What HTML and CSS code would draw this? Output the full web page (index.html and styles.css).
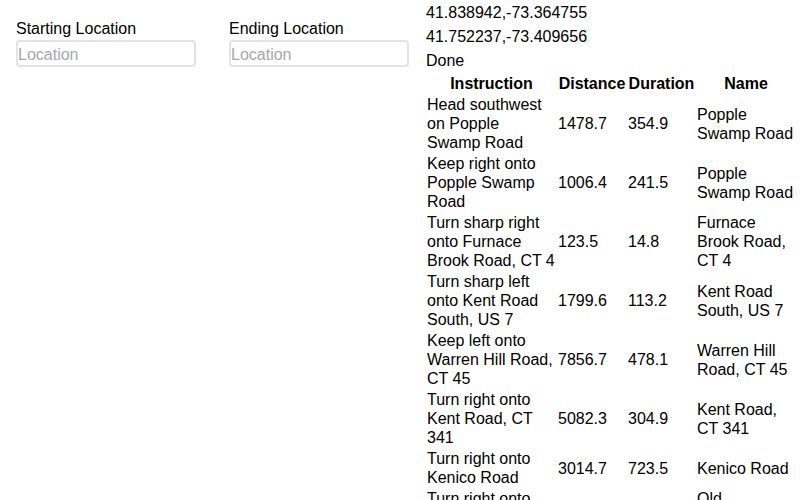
FILE: index.html
```html
<!DOCTYPE html>
<html lang="en">
<head>
<meta charset="utf-8">
<title>Directions</title>
<link rel="stylesheet" href="styles.css">
</head>
<body>
<div class="app">
  <div class="field field-start">
    <label class="field-label" for="start">Starting Location</label>
    <input class="field-input" id="start" type="text" placeholder="Location">
  </div>
  <div class="field field-end">
    <label class="field-label" for="end">Ending Location</label>
    <input class="field-input" id="end" type="text" placeholder="Location">
  </div>
  <div class="results">
    <div class="coord">41.838942,-73.364755</div>
    <div class="coord">41.752237,-73.409656</div>
    <div class="coord">Done</div>
    <table class="steps">
      <colgroup>
        <col class="c-instr">
        <col class="c-dist">
        <col class="c-dur">
        <col class="c-name">
      </colgroup>
      <thead>
        <tr><th>Instruction</th><th>Distance</th><th>Duration</th><th>Name</th></tr>
      </thead>
      <tbody>
        <tr><td>Head southwest on Popple Swamp Road</td><td>1478.7</td><td>354.9</td><td>Popple Swamp Road</td></tr>
        <tr><td>Keep right onto Popple Swamp Road</td><td>1006.4</td><td>241.5</td><td>Popple Swamp Road</td></tr>
        <tr><td>Turn sharp right onto Furnace Brook Road, CT 4</td><td>123.5</td><td>14.8</td><td>Furnace Brook Road, CT 4</td></tr>
        <tr><td>Turn sharp left onto Kent Road South, US 7</td><td>1799.6</td><td>113.2</td><td>Kent Road South, US 7</td></tr>
        <tr><td>Keep left onto Warren Hill Road, CT 45</td><td>7856.7</td><td>478.1</td><td>Warren Hill Road, CT 45</td></tr>
        <tr><td>Turn right onto Kent Road, CT 341</td><td>5082.3</td><td>304.9</td><td>Kent Road, CT 341</td></tr>
        <tr><td>Turn right onto Kenico Road</td><td>3014.7</td><td>723.5</td><td>Kenico Road</td></tr>
        <tr><td>Turn right onto Old Greenwoods Road</td><td>412.6</td><td>61.2</td><td>Old Greenwoods Road</td></tr>
      </tbody>
    </table>
  </div>
</div>
</body>
</html>
```
FILE: styles.css
```css
html, body {
  margin: 0;
  padding: 0;
  background: #ffffff;
}

body {
  font-family: "Liberation Sans", Arial, sans-serif;
  font-size: 16px;
  color: #000000;
  overflow: hidden;
}

.app {
  display: flex;
  align-items: flex-start;
  padding: 1px 0 0 16px;
}

.field {
  display: flex;
  flex-direction: column;
  width: 180px;
  padding-top: 18px;
}

.field-start {
  margin-right: 33px;
}

.field-end {
  margin-right: 17px;
}

.field-label {
  line-height: 20px;
}

.field-input {
  box-sizing: border-box;
  width: 180px;
  height: 27px;
  margin: 1px 0 0 0;
  padding: 2px 0 0 0;
  border: 2px solid #e3e3e7;
  border-radius: 4px;
  font-family: "Liberation Sans", Arial, sans-serif;
  font-size: 16px;
  color: #000;
  background: #fff;
  outline: none;
}

.field-input::placeholder {
  color: #a6a6ae;
}

.results {
  display: flex;
  flex-direction: column;
}

.coord {
  line-height: 24px;
}

.steps {
  border-collapse: collapse;
  table-layout: fixed;
  width: 370px;
  line-height: 19px;
}

.c-instr { width: 131px; }
.c-dist { width: 70px; }
.c-dur { width: 69px; }
.c-name { width: 100px; }

.steps th,
.steps td {
  padding: 1px;
  vertical-align: middle;
}

.steps th {
  font-weight: bold;
  text-align: center;
}

.steps td {
  text-align: left;
}
```
